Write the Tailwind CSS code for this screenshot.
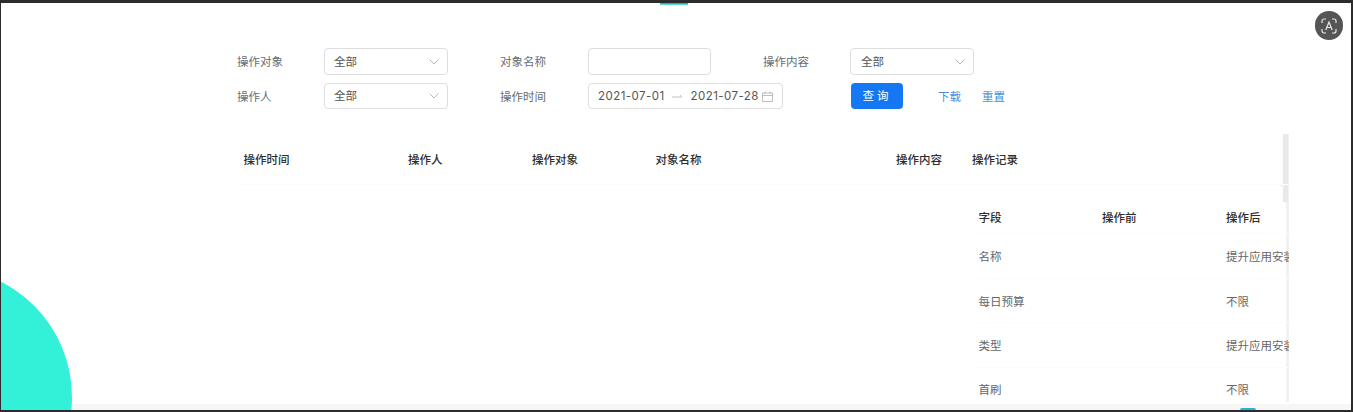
<!DOCTYPE html>
<html lang="zh">
<head>
<meta charset="utf-8">
<script src="https://cdn.jsdelivr.net/npm/@tailwindcss/browser@4"></script>
</head>
<body class="bg-[#2c2c2c] overflow-hidden">
<div class="w-[1353px] h-[412px] pt-[3px] pl-px pr-0.5 pb-0.5 font-['Inter','Noto_Sans_CJK_SC',sans-serif] text-[11.5px] leading-[16px]">
  <div class="relative w-full h-full bg-white overflow-hidden">
    <div class="absolute left-0 right-0 bottom-0 h-1.5 bg-[#f6f6f6]"></div>
    <div class="absolute left-[-187px] top-[265px] w-[258px] h-[258px] rounded-full bg-[#33f0d8]"></div>
    <div class="absolute left-[659px] top-0 w-7 h-0.5 bg-linear-to-b from-[#2f8fb5] to-[#5ff5ea]"></div>
    <div class="absolute left-[1239px] bottom-0 w-4 h-0.5 rounded-t-[8px] bg-linear-to-b from-[#2f9fd0] to-[#2ac8d0]"></div>
    <div class="absolute left-[1314px] top-[8px] w-[28px] h-[29px] rounded-full bg-[#555555] flex items-center justify-center">
      <svg width="18" height="18" viewBox="0 0 18 18" fill="none" stroke="#e8e8e8" stroke-width="1.2">
        <path d="M2 6V4a2 2 0 0 1 2-2h2M12 2h2a2 2 0 0 1 2 2v2M16 12v2a2 2 0 0 1-2 2h-2M6 16H4a2 2 0 0 1-2-2v-2"/>
        <path d="M5.8 13 9 5l3.2 8M7 10.5h4"/>
      </svg>
    </div>

    <div class="relative pl-[236px] pt-[45px]">
      <div class="flex h-[27px] items-center text-[#666c76]">
        <span class="w-[87px] shrink-0">操作对象</span>
        <div class="w-[124px] h-[27px] border border-[#dedede] rounded flex items-center justify-between pl-[9px] pr-[8px] text-[#555]">全部
          <svg width="10" height="6" viewBox="0 0 10 6" fill="none" stroke="#b8b8b8"><path d="M.5.5 5 5 9.5.5"/></svg>
        </div>
        <span class="w-[88px] ml-[52px]">对象名称</span>
        <div class="w-[123px] h-[27px] border border-[#dedede] rounded"></div>
        <span class="w-[87px] ml-[52px]">操作内容</span>
        <div class="w-[124px] h-[27px] border border-[#dedede] rounded flex items-center justify-between pl-[10px] pr-[8px] text-[#555]">全部
          <svg width="10" height="6" viewBox="0 0 10 6" fill="none" stroke="#b8b8b8"><path d="M.5.5 5 5 9.5.5"/></svg>
        </div>
      </div>
      <div class="flex h-[26px] mt-2 items-center text-[#666c76] pt-px">
        <span class="w-[87px]">操作人</span>
        <div class="w-[124px] h-[26px] -mt-px border border-[#dedede] rounded flex items-center justify-between pl-[9px] pr-[8px] text-[#555]">全部
          <svg width="10" height="6" viewBox="0 0 10 6" fill="none" stroke="#b8b8b8"><path d="M.5.5 5 5 9.5.5"/></svg>
        </div>
        <span class="w-[88px] ml-[52px]">操作时间</span>
        <div class="w-[195px] h-[26px] -mt-px border border-[#dedede] rounded flex items-center pl-[9px] pr-[9px] text-[#555] tracking-[0.45px] whitespace-nowrap">
          <span>2021-07-01</span>
          <svg class="ml-[7px] shrink-0" width="11" height="6" viewBox="0 0 11 6" fill="none" stroke="#c4c4c4"><path d="M0 4h10L8 2"/></svg>
          <span class="ml-[8px]">2021-07-28</span>
          <svg class="ml-[3px] shrink-0" width="11" height="11" viewBox="0 0 11 11" fill="none" stroke="#bdbdbd"><path d="M.5 2h10v8.5H.5zM.5 4.5h10M3 .5V3M8 .5V3"/></svg>
        </div>
        <div class="ml-[68px] w-[52px] h-[26px] -mt-px rounded bg-[#1677f5] text-white flex items-center justify-center tracking-[3px]">查询</div>
        <span class="ml-[35px] text-[#4a90d9]">下载</span>
        <span class="ml-[21px] text-[#4a90d9]">重置</span>
      </div>

      <div class="relative mt-[25px] w-[1052px] h-[268px]">
        <div class="absolute right-0 top-0 w-[6px] h-full">
          <div class="absolute right-0 top-0 w-[3px] h-full bg-[#f1f1f3]"></div>
          <div class="absolute left-0 top-0 w-[5px] h-[68px] bg-[#e9e9ec]"></div>
          <div class="absolute left-[-3px] top-[51px] w-[6px] h-px bg-[#efefef]"></div>
          <div class="absolute left-[-3px] top-[99px] w-[6px] h-px bg-[#efefef]"></div>
          <div class="absolute left-[-3px] top-[144px] w-[6px] h-px bg-[#efefef]"></div>
          <div class="absolute left-[-3px] top-[188px] w-[6px] h-px bg-[#efefef]"></div>
          <div class="absolute left-[-3px] top-[233px] w-[6px] h-px bg-[#efefef]"></div>
        </div>
        <div class="relative overflow-hidden h-full">
          <div class="flex h-[51px] pt-px items-center font-medium text-[#2e2e2e] border-b border-[#fcfcfc]">
            <span class="w-[164px] pl-[6.5px]">操作时间</span>
            <span class="w-[124px] pl-[7px]">操作人</span>
            <span class="w-[124px] pl-[7px]">操作对象</span>
            <span class="w-[240px] pl-[6.5px]">对象名称</span>
            <span class="w-[76px] pl-[7px]">操作内容</span>
            <span class="pl-[7px]">操作记录</span>
          </div>
          <div class="ml-[735px] mt-[17px] w-[317px]">
            <div class="flex h-[32px] items-center font-medium text-[#2e2e2e] border-b border-[#fcfcfc]">
              <span class="w-[123px] shrink-0 pl-[6.5px]">字段</span>
              <span class="w-[124px] shrink-0 pl-[7px]">操作前</span>
              <span class="shrink-0 pl-[7px]">操作后</span>
            </div>
            <div class="flex h-[45px] pt-[2px] items-center text-[#666] border-b border-[#fcfcfc] whitespace-nowrap">
              <span class="w-[123px] shrink-0 pl-[6.5px]">名称</span>
              <span class="w-[124px] shrink-0"></span>
              <span class="shrink-0 pl-[7px]">提升应用安装</span>
            </div>
            <div class="flex h-[44px] pt-[2px] items-center text-[#666] border-b border-[#fcfcfc] whitespace-nowrap">
              <span class="w-[123px] shrink-0 pl-[6.5px]">每日预算</span>
              <span class="w-[124px] shrink-0"></span>
              <span class="shrink-0 pl-[7px]">不限</span>
            </div>
            <div class="flex h-[45px] pt-[2px] items-center text-[#666] border-b border-[#fcfcfc] whitespace-nowrap">
              <span class="w-[123px] shrink-0 pl-[6.5px]">类型</span>
              <span class="w-[124px] shrink-0"></span>
              <span class="shrink-0 pl-[7px]">提升应用安装</span>
            </div>
            <div class="flex h-[44px] items-center text-[#666] whitespace-nowrap">
              <span class="w-[123px] shrink-0 pl-[6.5px]">首刷</span>
              <span class="w-[124px] shrink-0"></span>
              <span class="shrink-0 pl-[7px]">不限</span>
            </div>
          </div>
        </div>
      </div>
    </div>
  </div>
</div>
</body>
</html>
